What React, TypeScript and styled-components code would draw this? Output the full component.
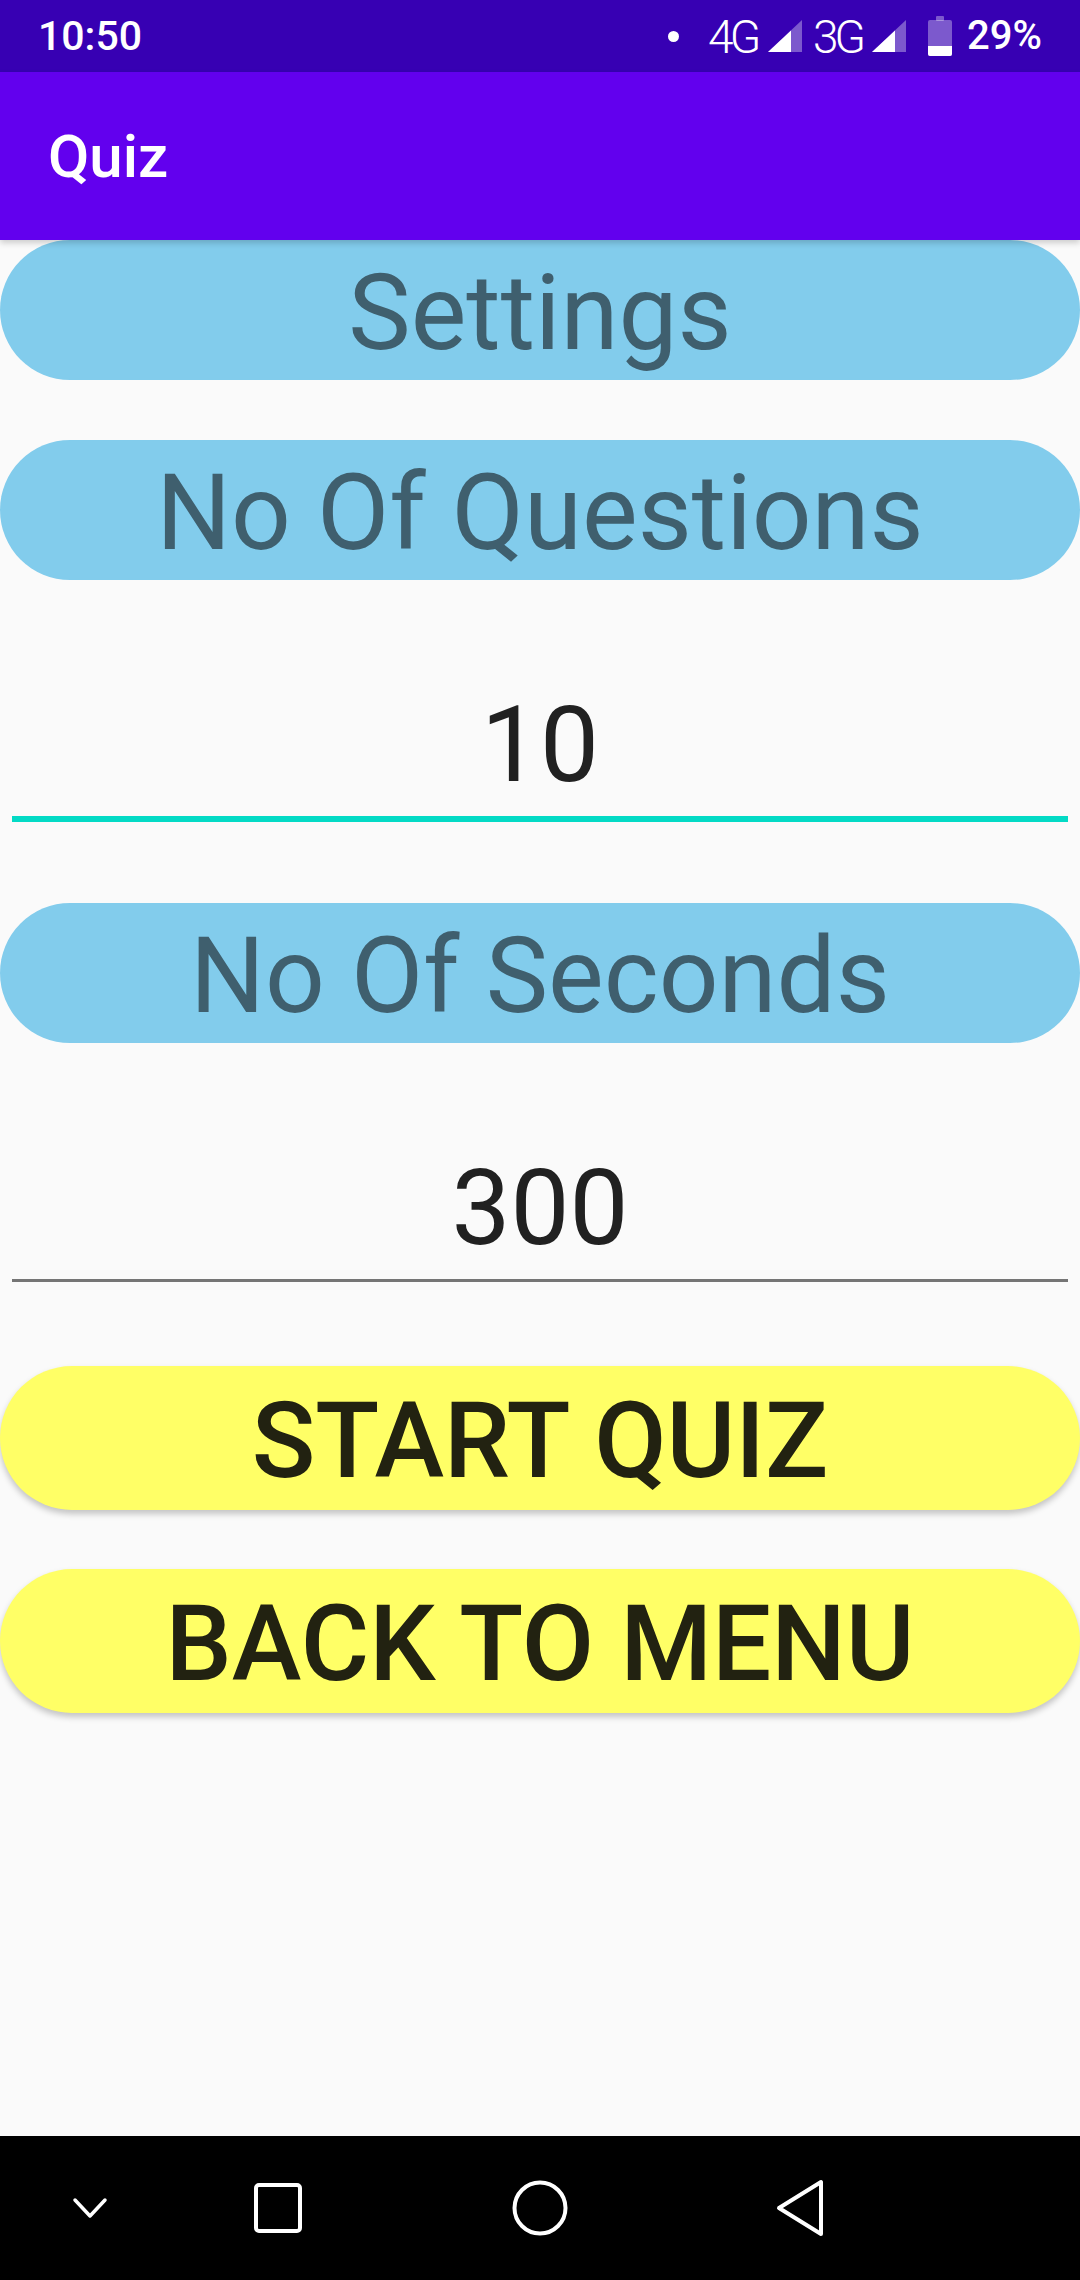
import React from "react";
import styled, { createGlobalStyle } from "styled-components";

const GlobalStyle = createGlobalStyle`
  html, body { margin: 0; padding: 0; background: #FAFAFA; }
  body { font-family: Roboto, "Noto Sans", "Liberation Sans", sans-serif; }
  #root { width: 1080px; }
`;

const Screen = styled.div`
  width: 1080px;
  height: 2280px;
  display: flex;
  flex-direction: column;
  background: #FAFAFA;
  overflow: hidden;
`;

const StatusBar = styled.div`
  height: 72px;
  flex-shrink: 0;
  background: #3700B3;
  color: #fff;
  display: flex;
  align-items: center;
  justify-content: space-between;
  padding: 0 38px;
  box-sizing: border-box;
`;

const Clock = styled.span`
  font-size: 41px;
  font-weight: 500;
  line-height: 1;
`;

const StatusIcons = styled.div`
  display: flex;
  align-items: center;
`;

const StatusItem = styled.span<{ $ml?: number }>`
  display: flex;
  align-items: center;
  margin-left: ${(p) => p.$ml ?? 0}px;
`;

const Dot = styled.span`
  width: 11px;
  height: 11px;
  border-radius: 50%;
  background: #fff;
`;

const NetLabel = styled.span`
  font-size: 46px;
  letter-spacing: -4px;
  line-height: 1;
  font-weight: 300;
  margin-top: 2px;
`;

const Percent = styled.span`
  font-size: 40px;
  font-weight: 500;
  line-height: 1;
`;

const AppBar = styled.header`
  height: 168px;
  flex-shrink: 0;
  background: #6200EE;
  color: #fff;
  display: flex;
  align-items: center;
  padding-left: 48px;
  font-size: 60px;
  font-weight: 500;
  position: relative;
  z-index: 1;
  box-shadow: 0 3px 6px rgba(0, 0, 0, 0.18);
`;

const Content = styled.main`
  flex: 1;
  display: flex;
  flex-direction: column;
`;

const Label = styled.div<{ $mt?: number }>`
  margin-top: ${(p) => p.$mt ?? 0}px;
  height: 140px;
  border-radius: 70px;
  background: #82CCEC;
  color: #3F5F6E;
  font-size: 105px;
  display: flex;
  align-items: center;
  justify-content: center;
  padding-top: 6px;
  box-sizing: border-box;
  line-height: 1;
`;

const Field = styled.div<{ $mt: number; $focused?: boolean }>`
  margin: ${(p) => p.$mt}px 12px 0;
  text-align: center;
  font-size: 105px;
  line-height: 123px;
  color: #212121;
  padding-bottom: 9px;
  border-bottom: ${(p) => (p.$focused ? "6px solid #03DAC5" : "3px solid #757575")};
`;

const ActionButton = styled.button<{ $mt: number }>`
  margin-top: ${(p) => p.$mt}px;
  height: 144px;
  width: 1080px;
  border: none;
  border-radius: 72px;
  background: #FFFF66;
  color: #222211;
  font-family: Roboto, "Noto Sans", sans-serif;
  font-size: 105px;
  font-weight: 500;
  display: flex;
  align-items: center;
  justify-content: center;
  padding: 6px 0 0;
  box-sizing: border-box;
  line-height: 1;
  box-shadow: 0 4px 6px rgba(0, 0, 0, 0.22);
`;

const NavBar = styled.nav`
  height: 144px;
  flex-shrink: 0;
  background: #000;
  display: flex;
  align-items: center;
`;

const NavSlot = styled.div<{ $w: number }>`
  width: ${(p) => p.$w}px;
  display: flex;
  justify-content: center;
  align-items: center;
`;

const Signal = () => (
  <svg width="36" height="34" viewBox="0 0 36 34">
    <polygon points="35,1 35,33 1,33" fill="rgba(255,255,255,0.35)" />
    <polygon points="1,33 24,11.4 24,33" fill="#fff" />
  </svg>
);

const Battery = () => (
  <svg width="24" height="40" viewBox="0 0 24 40">
    <rect x="8" y="0" width="8" height="5" rx="1" fill="rgba(255,255,255,0.35)" />
    <rect x="0" y="4" width="24" height="36" rx="2" fill="rgba(255,255,255,0.35)" />
    <path d="M0 30 H24 V38 a2 2 0 0 1 -2 2 H2 a2 2 0 0 1 -2 -2 Z" fill="#fff" />
  </svg>
);

export default function App() {
  return (
    <>
      <GlobalStyle />
      <Screen>
        <StatusBar>
          <Clock>10:50</Clock>
          <StatusIcons>
            <StatusItem><Dot /></StatusItem>
            <StatusItem $ml={29}><NetLabel>4G</NetLabel></StatusItem>
            <StatusItem $ml={10}><Signal /></StatusItem>
            <StatusItem $ml={10}><NetLabel>3G</NetLabel></StatusItem>
            <StatusItem $ml={9}><Signal /></StatusItem>
            <StatusItem $ml={21}><Battery /></StatusItem>
            <StatusItem $ml={15}><Percent>29%</Percent></StatusItem>
          </StatusIcons>
        </StatusBar>
        <AppBar>Quiz</AppBar>
        <Content>
          <Label>Settings</Label>
          <Label $mt={60}>No Of Questions</Label>
          <Field $mt={104} $focused>10</Field>
          <Label $mt={81}>No Of Seconds</Label>
          <Field $mt={104}>300</Field>
          <ActionButton $mt={84}>START QUIZ</ActionButton>
          <ActionButton $mt={59}>BACK TO MENU</ActionButton>
        </Content>
        <NavBar>
          <NavSlot $w={180}>
            <svg width="36" height="22" viewBox="0 0 36 22">
              <polyline points="3,3 18,19 33,3" fill="none" stroke="#fff" strokeWidth="3.5" strokeLinecap="round" strokeLinejoin="round" />
            </svg>
          </NavSlot>
          <NavSlot $w={196}>
            <svg width="48" height="50" viewBox="0 0 48 50">
              <rect x="2" y="2" width="44" height="46" rx="3" fill="none" stroke="#fff" strokeWidth="4" />
            </svg>
          </NavSlot>
          <NavSlot $w={328}>
            <svg width="56" height="56" viewBox="0 0 56 56">
              <circle cx="28" cy="28" r="25.5" fill="none" stroke="#fff" strokeWidth="4" />
            </svg>
          </NavSlot>
          <NavSlot $w={192}>
            <svg width="48" height="58" viewBox="0 0 48 58">
              <path d="M45 3 V55 L3 29 Z" fill="none" stroke="#fff" strokeWidth="4" strokeLinejoin="round" />
            </svg>
          </NavSlot>
        </NavBar>
      </Screen>
    </>
  );
}
